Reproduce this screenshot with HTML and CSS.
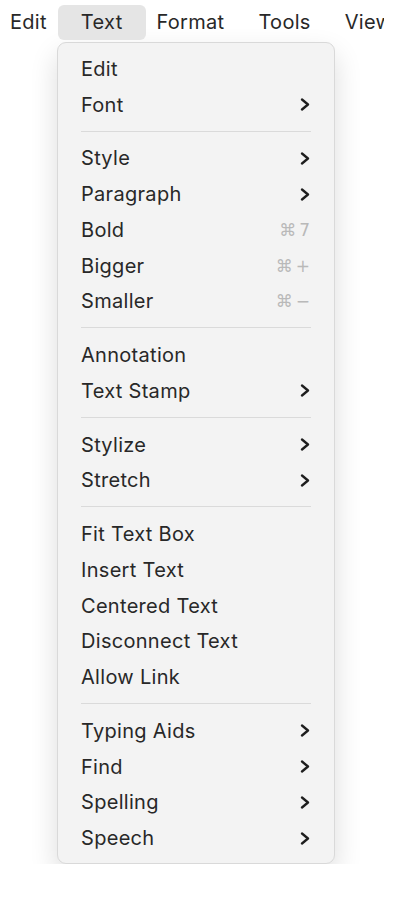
FILE: index.html
```html
<!DOCTYPE html>
<html lang="en">
<head>
    <meta charset="UTF-8">
    <meta name="viewport" content="width=device-width, initial-scale=1.0">
    <title>Text Menu</title>
    <link rel="stylesheet" href="styles.css">
</head>
<body>

<div class="menubar">
    <span class="bar-item">Edit</span>
    <span class="bar-item active">Text</span>
    <span class="bar-item">Format</span>
    <span class="bar-item">Tools</span>
    <span class="bar-item">View</span>
</div>

<div class="menu">
    <div class="item">Edit</div>
    <div class="item">Font <svg class="chev" viewBox="0 0 10 13"><path d="M2 1.5 L8 6.5 L2 11.5"/></svg></div>
    <div class="sep"></div>
    <div class="item">Style <svg class="chev" viewBox="0 0 10 13"><path d="M2 1.5 L8 6.5 L2 11.5"/></svg></div>
    <div class="item">Paragraph <svg class="chev" viewBox="0 0 10 13"><path d="M2 1.5 L8 6.5 L2 11.5"/></svg></div>
    <div class="item">Bold <span class="key">&#x2318;7</span></div>
    <div class="item">Bigger <span class="key">&#x2318;+</span></div>
    <div class="item">Smaller <span class="key">&#x2318;&#x2212;</span></div>
    <div class="sep"></div>
    <div class="item">Annotation</div>
    <div class="item">Text Stamp <svg class="chev" viewBox="0 0 10 13"><path d="M2 1.5 L8 6.5 L2 11.5"/></svg></div>
    <div class="sep"></div>
    <div class="item">Stylize <svg class="chev" viewBox="0 0 10 13"><path d="M2 1.5 L8 6.5 L2 11.5"/></svg></div>
    <div class="item">Stretch <svg class="chev" viewBox="0 0 10 13"><path d="M2 1.5 L8 6.5 L2 11.5"/></svg></div>
    <div class="sep"></div>
    <div class="item">Fit Text Box</div>
    <div class="item">Insert Text</div>
    <div class="item">Centered Text</div>
    <div class="item">Disconnect Text</div>
    <div class="item">Allow Link</div>
    <div class="sep"></div>
    <div class="item">Typing Aids <svg class="chev" viewBox="0 0 10 13"><path d="M2 1.5 L8 6.5 L2 11.5"/></svg></div>
    <div class="item">Find <svg class="chev" viewBox="0 0 10 13"><path d="M2 1.5 L8 6.5 L2 11.5"/></svg></div>
    <div class="item">Spelling <svg class="chev" viewBox="0 0 10 13"><path d="M2 1.5 L8 6.5 L2 11.5"/></svg></div>
    <div class="item">Speech <svg class="chev" viewBox="0 0 10 13"><path d="M2 1.5 L8 6.5 L2 11.5"/></svg></div>
</div>

</body>
</html>
```

FILE: styles.css
```css
body {
    font-family: Inter, "Liberation Sans", sans-serif;
    background-color: #fff;
    color: #282828;
    margin: 0;
    padding: 0;
    width: 400px;
    overflow: hidden;
}

/* the bar is cut off at the window edge, like the screenshot */
.menubar {
    display: flex;
    align-items: center;
    width: 391px;
    height: 35px;
    margin-top: 5px;
    margin-left: -7px;
    overflow: hidden;
    white-space: nowrap;
    font-size: 20px;
    letter-spacing: 0.3px;
}

.bar-item {
    padding: 0 17px;
    line-height: 35px;
}

.bar-item.active {
    background-color: #e5e5e5;
    border-radius: 6px;
    padding: 0 24px 0 23px;
    margin: 0 -7px 0 -6px;
}

.menu {
    width: 278px;
    margin: 2px 0 0 57px;
    box-sizing: border-box;
    padding: 8px 23px 7px 23px;
    background-color: #f3f3f3;
    border: 1px solid #d9d9d9;
    border-radius: 9px;
    box-shadow: 0 12px 28px rgba(0, 0, 0, 0.14);
    font-size: 20px;
    letter-spacing: 0.3px;
}

.item {
    display: flex;
    justify-content: space-between;
    align-items: center;
    height: 35.75px;
}

.chev {
    width: 10px;
    height: 13px;
    fill: none;
    stroke: #1e1e1e;
    stroke-width: 2.3;
    stroke-linecap: round;
    stroke-linejoin: round;
    margin-right: 1px;
}

.key {
    color: #b9b9b9;
    font-family: "DejaVu Sans", sans-serif;
    font-size: 17px;
    letter-spacing: 3px;
    margin-right: -2px;
}

.sep {
    height: 1px;
    background-color: #dadada;
    margin: 8px 0 9px 0;
}
```
